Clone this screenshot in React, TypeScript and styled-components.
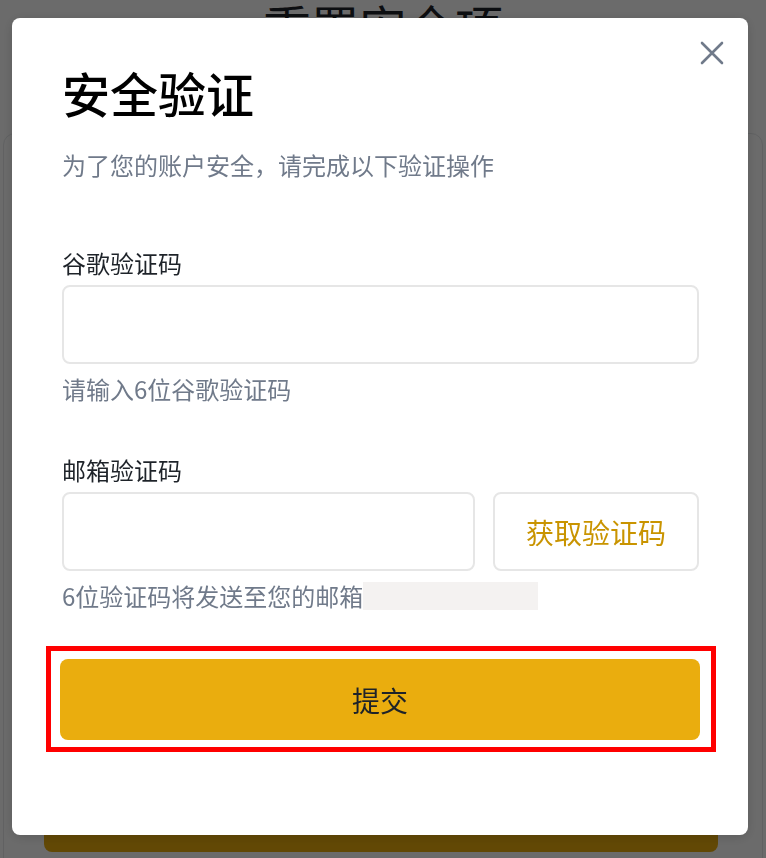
import React, { useState } from 'react';
import styled, { createGlobalStyle } from 'styled-components';

const GlobalStyle = createGlobalStyle`
  html, body {
    margin: 0;
    padding: 0;
    background: #fff;
    font-family: "Noto Sans CJK SC", "Noto Sans", sans-serif;
  }
  * {
    box-sizing: border-box;
  }
`;

/* page behind the dialog */
const Page = styled.div`
  width: 766px;
  height: 858px;
  overflow: hidden;
  padding: 0 3px;
`;

const PageTitle = styled.h1`
  margin: 0;
  font-size: 48px;
  font-weight: 400;
  line-height: 50px;
  text-align: center;
  color: #1e2329;
`;

const PageCard = styled.div`
  margin-top: 83px;
  height: 760px;
  border: 1px solid #e6e8ea;
  border-radius: 12px;
  padding: 658px 44px 0 40px;
`;

const PageButton = styled.div`
  height: 60px;
  background: #eaad0e;
  border-radius: 8px;
`;

/* dialog */
const Overlay = styled.div`
  position: fixed;
  inset: 0;
  background: rgba(0, 0, 0, 0.58);
  padding: 18px 0 0 12px;
`;

const Modal = styled.div`
  position: relative;
  width: 736px;
  height: 817px;
  background: #fff;
  border-radius: 8px;
  padding: 46px 49px 0 50px;
  box-shadow: 0 2px 12px rgba(0, 0, 0, 0.15);
`;

const Close = styled.button`
  position: absolute;
  top: 13px;
  right: 14px;
  width: 44px;
  height: 44px;
  border: 0;
  background: none;
  padding: 0;
  display: flex;
  align-items: center;
  justify-content: center;
  cursor: pointer;
`;

const Title = styled.h2`
  margin: 0;
  font-size: 48px;
  font-weight: 500;
  line-height: 56px;
  color: #000;
`;

const Subtitle = styled.p`
  margin: 29px 0 0;
  font-size: 24px;
  line-height: 32px;
  color: #707a8a;
`;

const Field = styled.div<{ $top: number }>`
  margin-top: ${(p) => p.$top}px;
  display: flex;
  flex-direction: column;
`;

const Label = styled.label`
  font-size: 24px;
  line-height: 32px;
  color: #1e2329;
`;

const Row = styled.div`
  margin-top: 6px;
  display: flex;
  gap: 18px;
`;

const Input = styled.input`
  flex: 1;
  min-width: 0;
  height: 79px;
  border: 2px solid #e6e6e6;
  border-radius: 8px;
  padding: 0 18px;
  font-family: inherit;
  font-size: 24px;
  outline: none;
  background: #fff;
`;

const CodeButton = styled.button`
  width: 206px;
  height: 79px;
  border: 2px solid #e6e6e6;
  border-radius: 8px;
  background: #fff;
  color: #c99400;
  font-family: inherit;
  font-size: 28px;
  cursor: pointer;
`;

const Hint = styled.div`
  margin-top: 9px;
  display: flex;
  align-items: center;
  font-size: 24px;
  line-height: 32px;
  color: #707a8a;
`;

const Masked = styled.span`
  display: inline-block;
  width: 175px;
  height: 28px;
  background: #f4f2f1;
`;

const Highlight = styled.div`
  margin: 34px -17px 0 -16px;
  border: 5px solid #ff0000;
  padding: 8px 11px 7px 9px;
`;

const Submit = styled.button`
  width: 100%;
  height: 81px;
  border: 0;
  border-radius: 8px;
  background: #eaad0e;
  color: #1e2329;
  font-family: inherit;
  font-size: 28px;
  cursor: pointer;
`;

export default function App() {
  const [google, setGoogle] = useState('');
  const [email, setEmail] = useState('');

  return (
    <>
      <GlobalStyle />
      <Page>
        <PageTitle>重置安全项</PageTitle>
        <PageCard>
          <PageButton />
        </PageCard>
      </Page>
      <Overlay>
        <Modal>
          <Close aria-label="close">
            <svg width="24" height="24" viewBox="0 0 24 24">
              <path
                d="M2 2L22 22M22 2L2 22"
                stroke="#707a8a"
                strokeWidth="2.6"
                strokeLinecap="round"
              />
            </svg>
          </Close>
          <Title>安全验证</Title>
          <Subtitle>为了您的账户安全，请完成以下验证操作</Subtitle>

          <Field $top={66}>
            <Label>谷歌验证码</Label>
            <Row>
              <Input value={google} onChange={(e) => setGoogle(e.target.value)} />
            </Row>
            <Hint>请输入6位谷歌验证码</Hint>
          </Field>

          <Field $top={49}>
            <Label>邮箱验证码</Label>
            <Row>
              <Input value={email} onChange={(e) => setEmail(e.target.value)} />
              <CodeButton>获取验证码</CodeButton>
            </Row>
            <Hint>
              6位验证码将发送至您的邮箱
              <Masked />
            </Hint>
          </Field>

          <Highlight>
            <Submit>提交</Submit>
          </Highlight>
        </Modal>
      </Overlay>
    </>
  );
}
